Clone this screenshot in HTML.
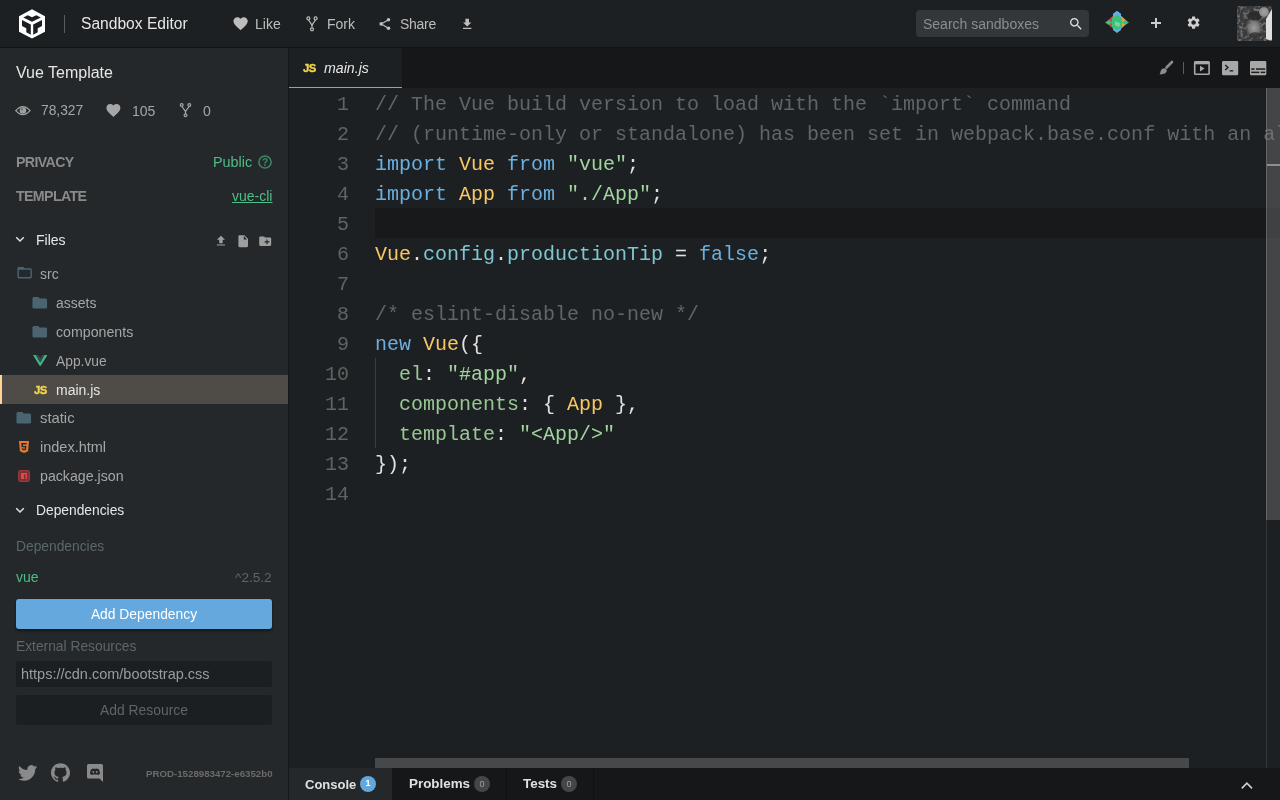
<!DOCTYPE html>
<html><head><meta charset="utf-8">
<style>
*{box-sizing:border-box;margin:0;padding:0}
.t,.code,.ln{will-change:transform}
html,body{width:1280px;height:800px;overflow:hidden;background:#1C2022;font-family:"Liberation Sans",sans-serif;}
.abs{position:absolute;display:block}
.t{position:absolute;white-space:nowrap;line-height:1}
#hdr{position:absolute;left:0;top:0;width:1280px;height:47px;background:#1C2022}
#hline{position:absolute;left:0;top:47px;width:1280px;height:1px;background:#111315}
#side{position:absolute;left:0;top:48px;width:288px;height:752px;background:#24282A}
#vsep{position:absolute;left:288px;top:48px;width:1px;height:752px;background:#151719}
#tabs{position:absolute;left:289px;top:48px;width:991px;height:40px;background:#151719}
#editor{position:absolute;left:289px;top:88px;width:991px;height:680px;background:#1C2022;overflow:hidden}
#bottom{position:absolute;left:289px;top:768px;width:991px;height:32px;background:#151718}
.code{position:absolute;left:86px;top:2px;font-family:"Liberation Mono",monospace;font-size:20px;line-height:30px;color:#E0E0E0;white-space:pre}
.ln{position:absolute;left:0;top:2px;width:60px;text-align:right;font-family:"Liberation Mono",monospace;font-size:20px;line-height:30px;color:#616263;white-space:pre}
.c{color:#626466}.k{color:#6CAEDD}.y{color:#FAC863}.s{color:#A1D49E}.p{color:#7FC6D0}.g{color:#99C794}
.hd{font-size:14px;color:#BDBDBD}
.row{font-size:14px;color:#A6A6A6}
</style></head><body>
<div id="hdr">
  <!-- logo cube -->
  <svg class="abs" style="left:0;top:0" width="60" height="47" viewBox="0 0 60 47">
    <polygon points="32,9.3 45,16.3 45,31.8 32,38.5 19,31.8 19,16.3" fill="#FFFFFF"/>
    <polygon points="23.3,17.5 27.8,15.3 32,17.3 36.3,15.3 40.8,17.5 32,21.8" fill="#1C2022"/>
    <polygon points="22,20 30.8,24.5 30.8,34.8 26.3,32.3 26.3,28.3 22,26" fill="#1C2022"/>
    <polygon points="42,20 33.2,24.5 33.2,34.8 37.7,32.3 37.7,28.3 42,26" fill="#1C2022"/>
  </svg>
  <div class="abs" style="left:64px;top:15px;width:1px;height:18px;background:#5A5D60"></div>
  <div class="t" style="left:81px;top:16px;font-size:15.6px;color:#E6E6E6">Sandbox Editor</div>
  <!-- like -->
  <svg class="abs" style="left:231.6px;top:15.4px" width="17.2" height="17.2" viewBox="0 0 24 24"><path fill="#BDBDBD" d="M12 21.35l-1.45-1.32C5.4 15.36 2 12.28 2 8.5 2 5.42 4.42 3 7.5 3c1.74 0 3.41.81 4.5 2.09C13.09 3.81 14.76 3 16.5 3 19.58 3 22 5.42 22 8.5c0 3.78-3.4 6.86-8.55 11.54L12 21.35z"/></svg>
  <div class="t hd" style="left:255px;top:17px">Like</div>
  <!-- fork -->
  <svg class="abs" style="left:300px;top:12px" width="24" height="24" viewBox="300 12 24 24">
    <g fill="none" stroke="#BDBDBD" stroke-width="1.2">
      <circle cx="308.4" cy="18.4" r="1.5"/><circle cx="315.6" cy="18.4" r="1.5"/><circle cx="312" cy="29.3" r="1.5"/>
      <polyline points="308.6,20 312,25.2 315.4,20"/><line x1="312" y1="25" x2="312" y2="27.8"/>
    </g>
  </svg>
  <div class="t hd" style="left:327px;top:17px">Fork</div>
  <!-- share -->
  <svg class="abs" style="left:375px;top:12px" width="20" height="24" viewBox="375 12 20 24">
    <g fill="#BDBDBD"><circle cx="388.5" cy="19.7" r="1.8"/><circle cx="381.2" cy="23.9" r="1.8"/><circle cx="388.5" cy="28.2" r="1.8"/></g>
    <g stroke="#BDBDBD" stroke-width="1.2"><line x1="388.5" y1="19.7" x2="381.2" y2="23.9"/><line x1="381.2" y1="23.9" x2="388.5" y2="28.2"/></g>
  </svg>
  <div class="t hd" style="left:400px;top:17px;letter-spacing:-0.28px">Share</div>
  <!-- download -->
  <svg class="abs" style="left:459.8px;top:16.7px" width="14.4" height="14.4" viewBox="0 0 24 24"><path fill="#BDBDBD" d="M19 9h-4V3H9v6H5l7 7 7-7zM5 18v2h14v-2H5z"/></svg>
  <!-- search -->
  <div class="abs" style="left:916px;top:10px;width:173px;height:27px;background:#33373A;border-radius:4px"></div>
  <div class="t" style="left:923px;top:17.3px;font-size:14px;color:#8B8D8F">Search sandboxes</div>
  <svg class="abs" style="left:1068px;top:16px" width="16" height="16" viewBox="0 0 24 24"><path fill="#E0E0E0" d="M15.5 14h-.79l-.28-.27C15.41 12.59 16 11.11 16 9.5 16 5.91 13.09 3 9.5 3S3 5.91 3 9.5 5.91 16 9.5 16c1.61 0 3.09-.59 4.23-1.57l.27.28v.79l5 4.99L20.49 19l-4.99-5zm-6 0C7.010 14 5 11.99 5 9.5S7.01 5 9.5 5 14 7.01 14 9.5 11.99 14 9.5 14z"/></svg>
  <!-- diamond -->
  <svg class="abs" style="left:1100px;top:8px" width="36" height="32" viewBox="1100 8 36 32">
    <polygon points="1113,15.8 1107.2,21 1107.2,23.6 1113,28.8" fill="#D94545"/>
    <polygon points="1121,15.8 1126.8,21 1126.8,23.6 1121,28.8" fill="#E3A548"/>
    <polygon points="1117,10.8 1121,13.8 1121,30 1117,33 1113,30 1113,13.8" fill="#64AEE6"/>
    <polygon points="1117,14.8 1122,18 1122,27 1117,30.2 1112,27 1112,18" fill="#39C27A"/>
    <polygon points="1105,22.5 1108.5,20.3 1112.5,22.5 1108.5,24.7" fill="#39C27A"/>
    <polygon points="1121.5,22.5 1125.5,20.3 1129,22.5 1125.5,24.7" fill="#39C27A"/>
    <polygon points="1115.5,21 1120.5,23.5 1119,27 1114.5,25" fill="#A8E8C4" opacity=".55"/>
  </svg>
  <!-- plus -->
  <div class="abs" style="left:1151.2px;top:22.2px;width:9.6px;height:1.6px;background:#CDCDCD"></div>
  <div class="abs" style="left:1155.2px;top:18.2px;width:1.6px;height:9.6px;background:#CDCDCD"></div>
  <!-- gear -->
  <svg class="abs" style="left:1186.4px;top:15.4px" width="15.2" height="15.2" viewBox="0 0 24 24"><path fill="#D0D0D0" d="M19.14 12.94c.04-.3.06-.61.06-.94 0-.32-.02-.64-.07-.94l2.03-1.58c.18-.14.23-.41.12-.61l-1.92-3.32c-.12-.22-.37-.29-.59-.22l-2.39.96c-.5-.38-1.030-.7-1.62-.94l-.36-2.54c-.04-.24-.24-.41-.48-.41h-3.84c-.24 0-.43.17-.47.41l-.36 2.54c-.59.24-1.13.57-1.62.94l-2.39-.96c-.22-.08-.47 0-.59.22L2.74 8.87c-.12.21-.08.47.12.61l2.03 1.58c-.05.3-.09.63-.09.94s.02.64.07.94l-2.03 1.58c-.18.14-.23.41-.12.61l1.92 3.32c.12.22.37.29.59.22l2.39-.96c.5.38 1.03.7 1.62.94l.36 2.54c.05.24.24.41.48.41h3.84c.24 0 .44-.17.47-.41l.36-2.54c.59-.24 1.13-.56 1.62-.94l2.39.96c.22.08.47 0 .59-.22l1.92-3.32c.12-.22.07-.47-.12-.61l-2.01-1.58zM12 15.6c-1.98 0-3.6-1.62-3.6-3.6s1.62-3.6 3.6-3.6 3.6 1.62 3.6 3.6-1.62 3.6-3.6 3.6z"/></svg>
  <!-- avatar -->
  <svg class="abs" style="left:1237px;top:6px" width="35" height="35" viewBox="0 0 35 35">
    <defs>
      <filter id="nz" x="0" y="0" width="100%" height="100%"><feTurbulence type="fractalNoise" baseFrequency="0.3" numOctaves="2" seed="7"/><feColorMatrix type="matrix" values="0 0 0 0 0.55  0 0 0 0 0.55  0 0 0 0 0.55  0 0 0 1.6 -0.75"/></filter>
      <radialGradient id="face" cx="0.5" cy="0.5" r="0.5"><stop offset="0" stop-color="#9C9C9C"/><stop offset="0.6" stop-color="#767676"/><stop offset="1" stop-color="#505050" stop-opacity="0"/></radialGradient>
      <radialGradient id="tr" cx="0.5" cy="0.5" r="0.5"><stop offset="0" stop-color="#A4A4A4"/><stop offset="0.8" stop-color="#8a8a8a"/><stop offset="1" stop-color="#606060" stop-opacity="0"/></radialGradient>
      <clipPath id="avc"><rect width="35" height="35" rx="2"/></clipPath>
    </defs>
    <g clip-path="url(#avc)">
    <rect width="35" height="35" fill="#3A3A3A"/>
    <rect width="35" height="35" filter="url(#nz)"/>
    <ellipse cx="17" cy="22" rx="9" ry="11" fill="url(#face)"/>
    <ellipse cx="18" cy="10" rx="7.5" ry="4.5" fill="#262626" opacity=".75"/>
    <ellipse cx="18" cy="29.5" rx="6" ry="3.2" fill="#2A2A2A" opacity=".7"/>
    <ellipse cx="27" cy="6" rx="5.5" ry="5.5" fill="url(#tr)"/>
    <polygon points="29,13 35,3 35,35 29,33" fill="#E0E0E0"/>
    </g>
  </svg>
</div>
<div id="hline"></div>
<div id="side">
  <div class="t" style="left:16px;top:16.6px;font-size:16px;color:#E6E6E6">Vue Template</div>
  <!-- stats -->
  <svg class="abs" style="left:14px;top:54px" width="18" height="18" viewBox="14 102 18 18"><path d="M15.8,110.6 Q22.9,102.6 30,110.6 Q22.9,118.6 15.8,110.6 Z" fill="none" stroke="#A0A0A0" stroke-width="1.4"/><circle cx="22.9" cy="110.5" r="3.3" fill="#A0A0A0"/><circle cx="21.8" cy="109.4" r="1.1" fill="#6a6a6a"/></svg>
  <div class="t" style="left:41px;top:56px;font-size:13.8px;color:#A6A6A6">78,327</div>
  <svg class="abs" style="left:104.6px;top:54.4px" width="16.8" height="16.8" viewBox="0 0 24 24"><path fill="#A6A6A6" d="M12 21.35l-1.45-1.32C5.4 15.36 2 12.28 2 8.5 2 5.42 4.42 3 7.5 3c1.74 0 3.41.81 4.5 2.09C13.09 3.81 14.76 3 16.5 3 19.58 3 22 5.42 22 8.5c0 3.78-3.4 6.86-8.55 11.54L12 21.35z"/></svg>
  <div class="t" style="left:131.5px;top:56px;font-size:14px;color:#A6A6A6">105</div>
  <svg class="abs" style="left:175px;top:52px" width="22" height="24" viewBox="175 100 22 24">
    <g fill="none" stroke="#A6A6A6" stroke-width="1.2">
      <circle cx="181.7" cy="105" r="1.4"/><circle cx="189.3" cy="105" r="1.4"/><circle cx="185.5" cy="115.3" r="1.4"/>
      <polyline points="181.9,106.5 185.5,111.4 189.1,106.5"/><line x1="185.5" y1="111.2" x2="185.5" y2="113.9"/>
    </g>
  </svg>
  <div class="t" style="left:202.5px;top:56px;font-size:14px;color:#A6A6A6">0</div>
  <!-- privacy / template -->
  <div class="t" style="left:16px;top:107.2px;font-size:14.2px;font-weight:bold;color:#8A8A8A;letter-spacing:-0.63px">PRIVACY</div>
  <div class="t" style="left:212.5px;top:106.8px;font-size:14.4px;color:#4DBE85">Public</div>
  <svg class="abs" style="left:256px;top:106px" width="18" height="16" viewBox="256 154 18 16">
    <circle cx="265" cy="162" r="6.1" fill="none" stroke="#3B8A63" stroke-width="1.5"/>
    <text x="265" y="166" text-anchor="middle" font-family="Liberation Sans" font-weight="bold" font-size="10" fill="#3B8A63">?</text>
  </svg>
  <div class="t" style="left:16px;top:141.3px;font-size:14.2px;font-weight:bold;color:#8A8A8A;letter-spacing:-0.63px">TEMPLATE</div>
  <div class="t" style="left:232px;top:140.6px;font-size:14px;color:#4DBE85;text-decoration:underline">vue-cli</div>
  <!-- files header -->
  <svg class="abs" style="left:14px;top:185px" width="12" height="10" viewBox="14 233 12 10"><polyline points="16.2,237.2 20,241 23.8,237.2" fill="none" stroke="#E0E0E0" stroke-width="1.5"/></svg>
  <div class="t" style="left:36.3px;top:185.2px;font-size:14px;color:#E6E6E6">Files</div>
  <svg class="abs" style="left:213.8px;top:185.5px" width="13.9" height="13.9" viewBox="0 0 24 24"><path fill="#9E9E9E" d="M9 16h6v-6h4l-7-7-7 7h4zm-4 2h14v2H5z"/></svg>
  <svg class="abs" style="left:235.6px;top:185.8px" width="14.4" height="14.4" viewBox="0 0 24 24"><path fill="#9E9E9E" d="M6 2c-1.1 0-1.99.9-1.99 2L4 20c0 1.1.89 2 1.99 2H18c1.1 0 2-.9 2-2V8l-6-6H6zm7 7V3.5L18.5 9H13z"/></svg>
  <svg class="abs" style="left:257.7px;top:185.5px" width="14.4" height="14.4" viewBox="0 0 24 24"><path fill="#9E9E9E" d="M20 6h-8l-2-2H4c-1.11 0-1.99.89-1.99 2L2 18c0 1.11.89 2 2 2h16c1.11 0 2-.89 2-2V8c0-1.11-.89-2-2-2zm-1 8h-3v3h-2v-3h-3v-2h3V9h2v3h3v2z"/></svg>
  <!-- tree -->
  <svg class="abs" style="left:15.5px;top:216.2px" width="17.3" height="17.3" viewBox="0 0 24 24"><path fill="#4A6472" d="M20 6h-8l-2-2H4c-1.1 0-1.99.9-1.99 2L2 18c0 1.1.9 2 2 2h16c1.1 0 2-.9 2-2V8c0-1.1-.9-2-2-2zm0 12H4V8h16v10z"/></svg>
  <div class="t row" style="left:40px;top:219.2px">src</div>
  <svg class="abs" style="left:31.1px;top:245.8px" width="17.5" height="17.5" viewBox="0 0 24 24"><path fill="#4A6472" d="M10 4H4c-1.1 0-1.99.9-1.99 2L2 18c0 1.1.9 2 2 2h16c1.1 0 2-.9 2-2V8c0-1.1-.9-2-2-2h-8l-2-2z"/></svg>
  <div class="t row" style="left:56.3px;top:248.2px">assets</div>
  <svg class="abs" style="left:31.1px;top:274.8px" width="17.5" height="17.5" viewBox="0 0 24 24"><path fill="#4A6472" d="M10 4H4c-1.1 0-1.99.9-1.99 2L2 18c0 1.1.9 2 2 2h16c1.1 0 2-.9 2-2V8c0-1.1-.9-2-2-2h-8l-2-2z"/></svg>
  <div class="t row" style="left:56px;top:277.2px;font-size:14.2px">components</div>
  <svg class="abs" style="left:32.8px;top:306.8px" width="14.4" height="11.6" viewBox="0 0 14.4 11.6">
    <polygon points="0,0 2.9,0 7.2,7.4 11.5,0 14.4,0 7.2,11.6" fill="#41B883"/>
    <polygon points="2.9,0 5.3,0 7.2,3.3 9.1,0 11.5,0 7.2,7.4" fill="#35495E"/>
  </svg>
  <div class="t row" style="left:55.8px;top:307px;font-size:13.8px">App.vue</div>
  <div class="abs" style="left:0;top:327px;width:288px;height:29px;background:#4F4C47"></div>
  <div class="abs" style="left:0;top:327px;width:2px;height:29px;background:#FFD399"></div>
  <div class="t" style="left:33.6px;top:337px;font-size:11.4px;font-weight:bold;color:#F2D64B;-webkit-text-stroke:0.35px #F2D64B;letter-spacing:-0.6px">JS</div>
  <div class="t" style="left:56.3px;top:335px;font-size:14px;color:#E6E6E6">main.js</div>
  <svg class="abs" style="left:15.1px;top:361px" width="17.5" height="17.5" viewBox="0 0 24 24"><path fill="#4A6472" d="M10 4H4c-1.1 0-1.99.9-1.99 2L2 18c0 1.1.9 2 2 2h16c1.1 0 2-.9 2-2V8c0-1.1-.9-2-2-2h-8l-2-2z"/></svg>
  <div class="t row" style="left:40px;top:363.2px;font-size:14.8px">static</div>
  <svg class="abs" style="left:19px;top:393px" width="10" height="12" viewBox="0 0 10 12">
    <polygon points="0,0 10,0 9.1,10.2 5,12 0.9,10.2" fill="#E37933"/>
    <path d="M2.3,2 H7.7 L7.5,3.4 H3.9 L4,5 H7.4 L7.1,8.6 L5,9.4 L2.9,8.6 L2.8,7.2 H4.1 L4.2,7.8 L5,8.1 L5.8,7.8 L5.9,6.3 H2.6 Z" fill="#24282A"/>
  </svg>
  <div class="t row" style="left:40px;top:392.2px;font-size:14.5px">index.html</div>
  <svg class="abs" style="left:18.2px;top:422px" width="12" height="12" viewBox="0 0 12 12">
    <rect x="0.7" y="0.7" width="10.6" height="10.6" rx="1.5" fill="#7A2F33" stroke="#9A3A3E" stroke-width="1.2"/>
    <path d="M3,3 H9 V9 H7.5 V4.5 H6 V9 H3 Z" fill="#E04848"/>
  </svg>
  <div class="t row" style="left:40px;top:421.2px;font-size:14.2px">package.json</div>
  <!-- dependencies -->
  <svg class="abs" style="left:14px;top:457px" width="12" height="10" viewBox="14 505 12 10"><polyline points="16.2,508.2 20,512 23.8,508.2" fill="none" stroke="#E0E0E0" stroke-width="1.5"/></svg>
  <div class="t" style="left:36.3px;top:456.1px;font-size:13.8px;color:#E6E6E6">Dependencies</div>
  <div class="t" style="left:16px;top:492.2px;font-size:13.8px;color:#5C6766">Dependencies</div>
  <div class="t" style="left:16px;top:521.8px;font-size:14px;color:#4DBE85">vue</div>
  <div class="t" style="left:235px;top:522.6px;font-size:13.6px;color:#5F6467">^2.5.2</div>
  <div class="abs" style="left:16px;top:551px;width:256px;height:30px;background:#64A8DE;border-radius:3px;box-shadow:0 2px 3px rgba(0,0,0,.45)"></div>
  <div class="t" style="left:16px;top:560px;width:256px;text-align:center;font-size:13.85px;color:#FFFFFF">Add Dependency</div>
  <div class="t" style="left:16px;top:591.5px;font-size:13.8px;color:#5C6766">External Resources</div>
  <div class="abs" style="left:16px;top:613px;width:256px;height:26px;background:#1C1F21;border-radius:2px"></div>
  <div class="t" style="left:21.3px;top:618.7px;font-size:14.5px;color:#9A9C9D">https://cdn.com/bootstrap.css</div>
  <div class="abs" style="left:16px;top:647px;width:256px;height:30px;background:#1C1F21;border-radius:3px"></div>
  <div class="t" style="left:16px;top:656.1px;width:256px;text-align:center;font-size:13.9px;color:#5F6467">Add Resource</div>
  <!-- footer -->
  <svg class="abs" style="left:17.8px;top:716.8px" width="19.2" height="16" viewBox="0 2 24 20"><path fill="#8A8A8A" d="M23.953 4.57a10 10 0 01-2.825.775 4.958 4.958 0 002.163-2.723c-.951.555-2.005.959-3.127 1.184a4.92 4.920 0 00-8.384 4.482C7.69 8.095 4.067 6.13 1.64 3.162a4.822 4.822 0 00-.666 2.475c0 1.71.87 3.213 2.188 4.096a4.904 4.904 0 01-2.228-.616v.06a4.923 4.923 0 003.946 4.827 4.996 4.996 0 01-2.212.085 4.936 4.936 0 004.604 3.417 9.867 9.867 0 01-6.102 2.105c-.39 0-.779-.023-1.17-.067a13.995 13.995 0 007.557 2.209c9.053 0 13.998-7.496 13.998-13.985 0-.21 0-.42-.015-.63A9.935 9.935 0 0024 4.59z"/></svg>
  <svg class="abs" style="left:51.4px;top:715.2px" width="19" height="19" viewBox="0 0 24 24"><path fill="#8A8A8A" d="M12 .297c-6.63 0-12 5.373-12 12 0 5.303 3.438 9.8 8.205 11.385.6.113.82-.258.82-.577 0-.285-.01-1.040-.015-2.040-3.338.724-4.042-1.61-4.042-1.61C4.422 18.07 3.633 17.7 3.633 17.7c-1.087-.744.084-.729.084-.729 1.205.084 1.838 1.236 1.838 1.236 1.07 1.835 2.809 1.305 3.495.998.108-.776.417-1.305.76-1.605-2.665-.3-5.466-1.332-5.466-5.93 0-1.31.465-2.38 1.235-3.22-.135-.303-.54-1.523.105-3.176 0 0 1.005-.322 3.3 1.23.96-.267 1.98-.399 3-.405 1.02.006 2.04.138 3 .405 2.28-1.552 3.285-1.23 3.285-1.230.645 1.653.24 2.873.12 3.176.765.84 1.23 1.91 1.23 3.22 0 4.61-2.805 5.625-5.475 5.92.42.36.81 1.096.81 2.22 0 1.606-.015 2.896-.015 3.286 0 .315.21.69.825.57C20.565 22.092 24 17.592 24 12.297c0-6.627-5.373-12-12-12"/></svg>
  <svg class="abs" style="left:87px;top:716px" width="16" height="18" viewBox="0 0 16 18">
    <path d="M1.5,0 H14.5 A1.5,1.5 0 0 1 16,1.5 V18 L12.5,14.5 H1.5 A1.5,1.5 0 0 1 0,13 V1.5 A1.5,1.5 0 0 1 1.5,0 Z" fill="#8A8A8A"/>
    <path d="M4.2,5.2 C5,4.6 6,4.4 6.4,4.4 L6.6,4.8 C7.5,4.65 8.5,4.65 9.4,4.8 L9.6,4.4 C10,4.4 11,4.6 11.8,5.2 C12.7,6.8 13,8.4 12.9,9.9 C12.2,10.5 11.4,10.8 10.6,11 L10.1,10.2 C9,10.6 7,10.6 5.9,10.2 L5.4,11 C4.6,10.8 3.8,10.5 3.1,9.9 C3,8.4 3.3,6.8 4.2,5.2 Z" fill="#24282A"/>
    <circle cx="6.3" cy="8" r="0.9" fill="#8A8A8A"/><circle cx="9.7" cy="8" r="0.9" fill="#8A8A8A"/>
  </svg>
  <div class="t" style="left:146px;top:721px;font-size:9.7px;font-weight:bold;color:#6B6B6B">PROD-1528983472-e6352b0</div>
</div>
<div id="vsep"></div>
<div id="tabs">
  <div class="abs" style="left:0;top:0;width:113px;height:40px;background:#1C2022"></div>
  <div class="abs" style="left:0;top:38.5px;width:113px;height:1.6px;background:#6AAEDF"></div>
  <div class="t" style="left:14px;top:15.2px;font-size:11.4px;font-weight:bold;color:#F2D64B;-webkit-text-stroke:0.35px #F2D64B;letter-spacing:-0.6px">JS</div>
  <div class="t" style="left:35px;top:13px;font-size:14.2px;font-style:italic;color:#E6E6E6">main.js</div>
  <!-- brush -->
  <svg class="abs" style="left:869px;top:12px" width="16" height="16" viewBox="1158 60 16 16">
    <line x1="1166.5" y1="67.5" x2="1172" y2="62" stroke="#8C8C8C" stroke-width="2.6" stroke-linecap="round"/>
    <path d="M1164.3,68.2 C1166.3,68.2 1167.2,70 1166.6,71.6 C1165.8,73.8 1163,74.6 1159.2,74.6 C1160.4,73.6 1160.2,72.6 1160.6,71.2 C1161.1,69.4 1162.6,68.2 1164.3,68.2 Z" fill="#8C8C8C"/>
  </svg>
  <div class="abs" style="left:894px;top:14px;width:1px;height:12px;background:#5A5C5E"></div>
  <!-- preview -->
  <svg class="abs" style="left:904px;top:12px" width="18" height="16" viewBox="1193 60 18 16">
    <rect x="1194.7" y="61.9" width="14.4" height="12.3" rx="0.8" fill="none" stroke="#A8A8A8" stroke-width="1.6"/>
    <rect x="1194.5" y="61.5" width="14.8" height="2.8" fill="#A8A8A8"/>
    <polygon points="1200,65.8 1204.6,68.6 1200,71.4" fill="#A8A8A8"/>
  </svg>
  <!-- terminal -->
  <svg class="abs" style="left:932px;top:12px" width="18" height="16" viewBox="1221 60 18 16">
    <rect x="1222" y="61" width="16.2" height="14.2" rx="1.2" fill="#A8A8A8"/>
    <polyline points="1225.2,65 1228,67.5 1225.2,70" fill="none" stroke="#1A1C1E" stroke-width="1.4"/>
    <rect x="1229.6" y="70.2" width="3.6" height="1.3" fill="#1A1C1E"/>
  </svg>
  <!-- console -->
  <svg class="abs" style="left:960px;top:12px" width="18" height="16" viewBox="1249 60 18 16">
    <rect x="1250" y="61" width="16.3" height="14.2" rx="1.2" fill="#A8A8A8"/>
    <rect x="1251.2" y="68.3" width="3.4" height="1.5" fill="#1A1C1E"/>
    <rect x="1256" y="68.3" width="9.2" height="1.5" fill="#1A1C1E"/>
    <rect x="1251.2" y="71.6" width="8" height="1.5" fill="#1A1C1E"/>
    <rect x="1260.6" y="71.6" width="4.6" height="1.5" fill="#1A1C1E"/>
  </svg>
</div>
<div id="editor">
  <div class="abs" style="left:86px;top:120px;width:905px;height:30px;background:#17191B"></div>
  <div class="ln">1
2
3
4
5
6
7
8
9
10
11
12
13
14</div>
  <div class="code"><span class="c">// The Vue build version to load with the `import` command</span>
<span class="c">// (runtime-only or standalone) has been set in webpack.base.conf with an alias.</span>
<span class="k">import</span> <span class="y">Vue</span> <span class="k">from</span> <span class="s">"vue"</span>;
<span class="k">import</span> <span class="y">App</span> <span class="k">from</span> <span class="s">"./App"</span>;

<span class="y">Vue</span>.<span class="p">config</span>.<span class="p">productionTip</span> = <span class="k">false</span>;

<span class="c">/* eslint-disable no-new */</span>
<span class="k">new</span> <span class="y">Vue</span>({
  <span class="g">el</span>: <span class="s">"#app"</span>,
  <span class="g">components</span>: { <span class="y">App</span> },
  <span class="g">template</span>: <span class="s">"&lt;App/&gt;"</span>
});
</div>
  <div class="abs" style="left:86px;top:270px;width:1px;height:90px;background:#3A3D40"></div>
  <div class="abs" style="left:86px;top:670px;width:814px;height:10px;background:#47484A"></div>
  <div class="abs" style="left:977px;top:432px;width:1px;height:248px;background:#34373A"></div>
  <div class="abs" style="left:977px;top:0;width:14px;height:432px;background:rgba(121,121,121,.42);border-left:1px solid rgba(160,160,160,.35)"></div>
  <div class="abs" style="left:978px;top:76px;width:13px;height:2px;background:#8E8F90"></div>
</div>
<div id="bottom">
  <div class="abs" style="left:0;top:0;width:103px;height:32px;background:#24282A"></div>
  <div class="t" style="left:16px;top:9.7px;font-size:13px;font-weight:bold;color:#E0E0E0">Console</div>
  <div class="abs" style="left:71px;top:8px;width:16px;height:16px;border-radius:50%;background:#62A8DC"></div>
  <div class="t" style="left:71px;top:11.3px;width:16px;text-align:center;font-size:9px;font-weight:bold;color:#FFFFFF">1</div>
  <div class="abs" style="left:217px;top:0;width:1px;height:32px;background:#0E1012"></div>
  <div class="t" style="left:119.6px;top:9.4px;font-size:13.4px;font-weight:bold;color:#E0E0E0">Problems</div>
  <div class="abs" style="left:185px;top:8px;width:16px;height:16px;border-radius:50%;background:#444648"></div>
  <div class="t" style="left:185px;top:11.6px;width:16px;text-align:center;font-size:9px;color:#A0A0A0">0</div>
  <div class="abs" style="left:304px;top:0;width:1px;height:32px;background:#0E1012"></div>
  <div class="t" style="left:233.6px;top:9.4px;font-size:13.4px;font-weight:bold;color:#E0E0E0">Tests</div>
  <div class="abs" style="left:272px;top:8px;width:16px;height:16px;border-radius:50%;background:#444648"></div>
  <div class="t" style="left:272px;top:11.6px;width:16px;text-align:center;font-size:9px;color:#A0A0A0">0</div>
  <svg class="abs" style="left:948px;top:10px" width="16" height="14" viewBox="1237 778 16 14"><polyline points="1241.8,788.4 1246.9,783.2 1252,788.4" fill="none" stroke="#D0D0D0" stroke-width="1.6"/></svg>
</div>
</body></html>
